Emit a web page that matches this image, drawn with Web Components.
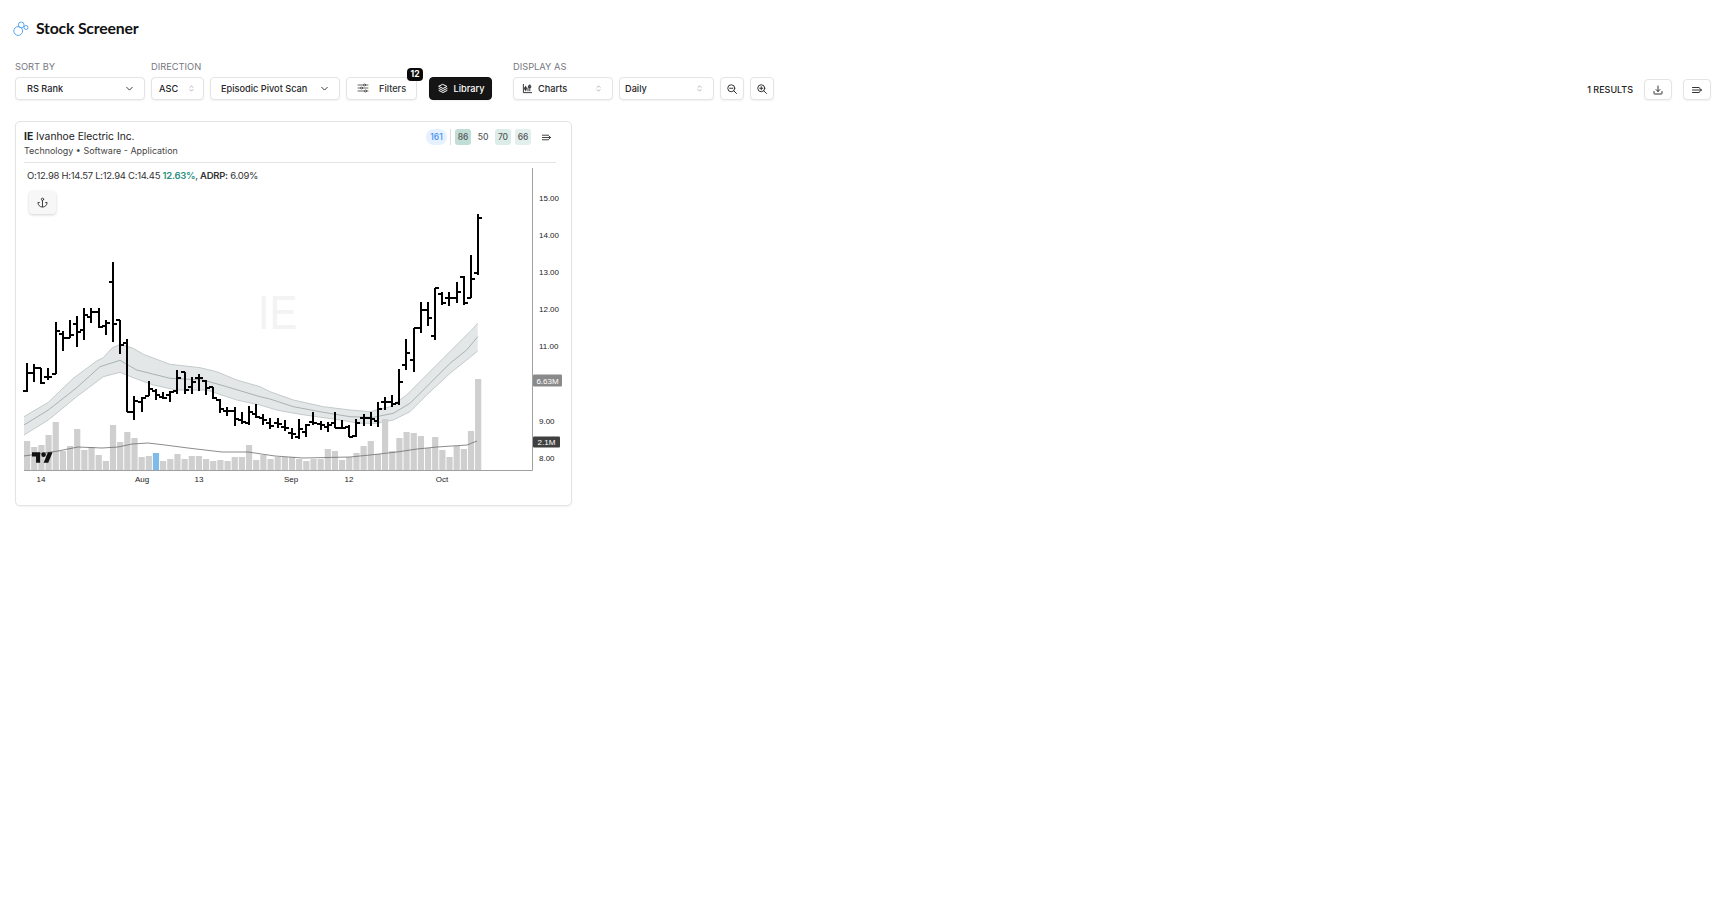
<!DOCTYPE html>
<html lang="en">
<head>
<meta charset="utf-8">
<title>Stock Screener</title>
<style>
  html, body { margin: 0; background: #fff; }
  body { font-family: "Inter", "Liberation Sans", sans-serif; color: #222; }
</style>
</head>
<body>
<screener-page></screener-page>

<script>
const ICONS = {
  chevron: `<path d="M6 9.5l6 6 6-6"/>`,
  updown: `<path d="M8 9l4-4 4 4M8 15l4 4 4-4"/>`,
  filters: `<path d="M2 6h11M17 6h5M2 12h5M11 12h11M2 18h13M19 18h3"/><circle cx="15" cy="6" r="2"/><circle cx="9" cy="12" r="2"/><circle cx="17" cy="18" r="2"/>`,
  layers: `<path d="M12 3l8 4-8 4-8-4zM4 11l8 4 8-4M4 15l8 4 8-4"/>`,
  charts: `<path d="M3 3v18h18M8 7v10M6.5 10h3v4h-3zM13 11v6M17 4v13M15 6h4v4h-4z"/>`,
  zoomout: `<circle cx="10.5" cy="10.5" r="7"/><path d="M21 21l-5.5-5.5M7.5 10.5h6"/>`,
  zoomin: `<circle cx="10.5" cy="10.5" r="7"/><path d="M21 21l-5.5-5.5M7.5 10.5h6M10.5 7.5v6"/>`,
  download: `<path d="M4 15v4a1 1 0 0 0 1 1h14a1 1 0 0 0 1-1v-4M12 4v11M8 11l4 4 4-4"/>`,
  lines: `<path d="M3 7h13M3 12h18M3 17h13M17 8.5l4 3.5-4 3.5"/>`,
  anchor: `<circle cx="12" cy="5" r="2.5"/><path d="M12 7.5V21M5 12H2a10 10 0 0 0 20 0h-3"/>`
};

function icon(name, size, width = 2) {
  return `<svg width="${size}" height="${size}" viewBox="0 0 24 24" fill="none" stroke="currentColor" stroke-width="${width}" stroke-linecap="round" stroke-linejoin="round">${ICONS[name]}</svg>`;
}

class ScreenerTitle extends HTMLElement {
  constructor() {
    super();
    this.attachShadow({ mode: "open" });
  }

  connectedCallback() {
    this.shadowRoot.innerHTML = /* html */`
    <style>
      :host { display: flex; align-items: center; gap: 7px; height: 20px; }
      svg { display: block; margin-top: 4px; }
      h1 {
        margin: 0;
        font: 700 15.8px "Lato", sans-serif;
        letter-spacing: -0.2px;
        color: #111;
      }
    </style>
    <svg width="16" height="16" viewBox="0 0 16 16" fill="none" stroke="#5aa7ee" stroke-width="1">
      <circle cx="5.2" cy="10" r="4.4"/>
      <circle cx="8.2" cy="3.9" r="2.9"/>
      <circle cx="13" cy="6.5" r="2"/>
    </svg>
    <h1><slot></slot></h1>`;
  }
}

class ToolSelect extends HTMLElement {
  constructor() {
    super();
    this.attachShadow({ mode: "open" });
  }

  connectedCallback() {
    const label = this.getAttribute("label");
    const kind = this.getAttribute("kind") || "chevron";
    const lead = this.getAttribute("lead");
    this.shadowRoot.innerHTML = /* html */`
    <style>
      :host { display: flex; flex-direction: column; gap: 4px; }
      .label {
        font-size: 9.3px;
        line-height: 12px;
        color: #77777f;
        text-transform: uppercase;
      }
      .box {
        display: flex;
        align-items: center;
        box-sizing: border-box;
        width: var(--w);
        height: 23px;
        padding: 0 var(--pr, 9px) 1px var(--pl, 11px);
        border: 1px solid #e4e4e7;
        border-radius: 4px;
        box-shadow: 0 1px 2px rgba(0, 0, 0, .06);
        font-size: 9.2px;
        font-weight: 500;
        color: #27272a;
        background: #fff;
      }
      .text { flex: 1; white-space: nowrap; }
      .lead { margin-right: 5px; display: flex; }
      .arrow { display: flex; color: ${kind === "updown" ? "#9a9aa2" : "#27272a"}; }
      svg { display: block; }
    </style>
    ${label ? `<div class="label">${label}</div>` : ""}
    <div class="box">
      ${lead ? `<span class="lead">${icon(lead, 11)}</span>` : ""}
      <span class="text"><slot></slot></span>
      <span class="arrow">${icon(kind, kind === "updown" ? 9 : 11, 2)}</span>
    </div>`;
  }
}

class ToolButton extends HTMLElement {
  constructor() {
    super();
    this.attachShadow({ mode: "open" });
  }

  connectedCallback() {
    const name = this.getAttribute("icon");
    const dark = this.hasAttribute("dark");
    const size = this.getAttribute("size") || 12;
    this.shadowRoot.innerHTML = /* html */`
    <style>
      :host { display: block; position: relative; }
      button {
        display: flex;
        align-items: center;
        justify-content: var(--justify, center);
        gap: var(--gap, 6px);
        box-sizing: border-box;
        width: var(--w, 24px);
        height: var(--h, 23px);
        padding: var(--pad, 0);
        border: 1px solid ${dark ? "#111" : "#e4e4e7"};
        border-radius: 4px;
        box-shadow: 0 1px 2px rgba(0, 0, 0, .06);
        background: ${dark ? "#151515" : "#fff"};
        color: ${dark ? "#fff" : "#333"};
        font: 500 9.2px "Inter", sans-serif;
      }
      svg { display: block; flex: none; }
      .badge {
        position: absolute;
        top: -9px;
        right: -6px;
        min-width: 16px;
        height: 13px;
        border-radius: 4px;
        background: #0a0a0a;
        color: #fff;
        font-size: 8.5px;
        font-weight: 700;
        line-height: 13px;
        text-align: center;
      }
      .badge:empty { display: none; }
    </style>
    <button>${icon(name, size, this.getAttribute("stroke") || 2)}<slot></slot></button>
    <div class="badge">${this.getAttribute("badge") || ""}</div>`;
  }
}

class RankBadges extends HTMLElement {
  constructor() {
    super();
    this.attachShadow({ mode: "open" });
  }

  connectedCallback() {
    this.shadowRoot.innerHTML = /* html */`
    <style>
      :host { display: flex; align-self: flex-start; align-items: center; gap: 4px; padding-right: 4px; font-size: 8.5px; font-weight: 500; color: #555; }
      span { width: 16px; height: 16px; border-radius: 3px; line-height: 16px; text-align: center; }
      .rank { width: 21px; border-radius: 8px; background: #e6f1ff; color: #3b8ff0; }
      i { width: 1px; height: 16px; margin: 0 0 0 -1px; background: #dcdcdc; }
      .a { background: #c0ddd6; }
      .c { background: #dcece8; }
      .d { background: #e3efec; }
      .menu { margin-left: 6px; display: flex; color: #333; }
      svg { display: block; }
    </style>
    <span class="rank">161</span><i></i>
    <span class="a">86</span><span>50</span><span class="c">70</span><span class="d">66</span>
    <div class="menu">${icon("lines", 11)}</div>`;
  }
}

// bar data is read off the chart: [high, low, open, close] in y pixels x3 from y=255
const BARS = [
  [325,410,408,355],[328,380,355,340],[338,388,338,385],[340,375,365,365],[200,358,356,228],
  [228,287,238,250],[195,250,248,240],[182,275,208,230],[158,255,225,180],[158,205,185,170],
  [158,220,170,215],[195,240,213,205],[22,262,80,207],[195,298,195,270],[253,472,265,470],
  [422,495,470,437],[425,470,440,430],[378,422,422,402],[402,436,408,420],[410,433,425,428],
  [407,442,420,410],[345,418,408,370],[352,418,352,405],[365,418,395,380],[358,408,370,368],
  [375,420,378,400],[395,432,395,430],[432,473,436,462],[455,482,467,467],[455,512,468,492],
  [470,508,495,500],[452,510,505,470],[448,490,478,485],[478,510,490,495],[490,522,505,512],
  [490,520,505,507],[495,527,515,518],[518,552,535,537],[492,552,547,522],[508,545,530,510],
  [472,510,500,505],[497,525,508,510],[500,532,515,510],[470,520,505,518],[495,522,518,518],
  [510,547,515,545],[492,545,543,503],[478,512,490,490],[472,512,490,492],[440,515,498,462],
  [427,465,440,440],[420,455,440,448],[343,450,445,380],[253,345,330,293],[220,350,315,220],
  [142,235,220,165],[142,212,165,190],[100,255,242,100],[110,150,118,145],[110,152,130,128],
  [80,145,128,112],[63,150,65,143],[0,130,130,72],[-123,60,54,-111]
];

const VOLUME = [
  29,23,25,35,48,19,24,41,20,23,15,9,45,28,38,32,13,14,17,9,11,16,11,14,14,11,9,10,9,13,13,25,10,15,11,
  13,13,13,11,9,11,11,21,19,10,13,17,24,29,16,51,19,32,38,37,34,22,33,20,13,24,21,39,91
];

const UPPER = [[12,485],[85,442],[160,370],[230,318],[250,308],[275,280],[300,268],[340,280],[370,298],[450,328],[540,338],[590,350],[650,375],[720,395],
  [750,410],[820,435],[910,455],[990,465],[1050,470],[1110,455],[1160,420],[1210,370],[1270,310],[1330,250],[1355,225],[1373,205]];
const MIDDLE = [[12,510],[85,465],[170,398],[240,335],[300,316],[350,345],[450,370],[550,375],[620,395],[720,425],
  [750,432],[820,455],[910,472],[990,485],[1060,487],[1120,475],[1170,445],[1230,385],[1290,325],[1340,285],[1373,245]];
const LOWER = [[12,540],[85,495],[170,425],[250,365],[300,352],[340,368],[400,390],[470,405],[560,405],[650,435],[720,450],
  [770,465],[840,478],[940,492],[1020,505],[1070,505],[1120,495],[1170,470],[1220,420],[1290,355],[1340,315],[1373,288]];
const VOLUME_MA = [[24,456],[58,451],[78,447],[102,448],[118,447],[132,444],[148,443],[165,445],[188,448],[222,452],[248,452],[275,456],
  [303,458],[350,457],[370,455],[397,452],[417,449],[437,447],[467,445],[477,441]];

const PRICES = ["15.00","14.00","13.00","12.00","11.00","10.00","9.00","8.00"];
const DATES = [["14",41],["Aug",142],["13",199],["Sep",291],["12",349],["Oct",442]];

class OhlcChart extends HTMLElement {
  constructor() {
    super();
    this.attachShadow({ mode: "open" });
  }

  static toPage([x, y]) {
    return [20 + x / 3, 255 + y / 3];
  }

  createBands() {
    const line = (points) => points.map(OhlcChart.toPage).map(p => p.map(n => n.toFixed(1)).join(",")).join(" ");
    const band = line(UPPER) + " " + line([...LOWER].reverse());
    return `
      <polygon points="${band}" fill="#e3e7e7"/>
      <polyline points="${line(UPPER)}" fill="none" stroke="#c3cbcb" stroke-width="1"/>
      <polyline points="${line(LOWER)}" fill="none" stroke="#c3cbcb" stroke-width="1"/>
      <polyline points="${line(MIDDLE)}" fill="none" stroke="#a9b3b3" stroke-width="1"/>`;
  }

  createVolume() {
    return VOLUME.map((h, i) => {
      const color = i === 18 ? "#7fbbe8" : "#cfcfcf";
      return `<rect x="${(24 + i * 7.16).toFixed(2)}" y="${470 - h}" width="6.2" height="${h}" fill="${color}"/>`;
    }).join("");
  }

  createBars() {
    return BARS.map(([high, low, open, close], i) => {
      const x = Math.round(27 + i * 7.16);
      const y = (v) => Math.round(255 + v / 3);
      return `<path d="M${x} ${y(high)}V${y(low)}M${x - 4} ${y(open)}H${x}M${x} ${y(close)}H${x + 4}"/>`;
    }).join("");
  }

  connectedCallback() {
    const priceLabels = PRICES.map((p, i) => `<text x="539" y="${(200.7 + i * 37.15).toFixed(1)}">${p}</text>`).join("");
    const dateLabels = DATES.map(([d, x]) => `<text x="${x}" y="482" text-anchor="middle">${d}</text>`).join("");
    const maLine = VOLUME_MA.map(p => p.join(",")).join(" ");

    this.shadowRoot.innerHTML = /* html */`
    <style>
      :host { display: block; position: relative; width: 555px; height: 335px; }
      svg.plot { display: block; font-family: "Liberation Sans", sans-serif; font-size: 8px; fill: #222; }
      .legend {
        position: absolute;
        left: 11px;
        top: 4px;
        font-size: 9.5px;
        letter-spacing: -0.28px;
        line-height: 14px;
        color: #333;
        white-space: nowrap;
      }
      .legend b { font-weight: 600; }
      .legend .up { color: #2a8f7f; font-weight: 600; }
      .anchor {
        position: absolute;
        left: 13px;
        top: 26px;
        width: 27px;
        height: 23px;
        display: flex;
        align-items: center;
        justify-content: center;
        border-radius: 4px;
        background: #f7f7f7;
        box-shadow: 0 1px 3px rgba(0, 0, 0, .18);
        color: #333;
      }
    </style>
    <svg class="plot" width="555" height="335" viewBox="16 165 555 335">
      <text transform="translate(258 328.5) scale(.85 1)" font-size="49" style="fill:#f3f3f3">IE</text>
      ${this.createBands()}
      ${this.createVolume()}
      <polyline points="${maLine}" fill="none" stroke="#6f6f6f" stroke-width=".8"/>
      <g stroke="#000" stroke-width="2" fill="none">${this.createBars()}</g>
      <g transform="translate(32 450) scale(.58)">
        <path d="M14 22H7V11H0V4h14v18zM28 22h-8l7.5-18h8L28 22z" fill="#111"/>
        <circle cx="20" cy="8" r="4" fill="#111"/>
      </g>
      <path d="M532.5 168V470.5H24" fill="none" stroke="#a0a0a0" stroke-width="1"/>
      ${priceLabels}
      ${dateLabels}
      <rect x="533" y="374.5" width="29" height="12" rx="1" fill="#8a8a8a"/>
      <text x="547.5" y="383.5" text-anchor="middle" style="fill:#fff">6.63M</text>
      <rect x="533" y="436.5" width="27" height="11" rx="1" fill="#3f3f3f"/>
      <text x="546.5" y="445" text-anchor="middle" style="fill:#fff">2.1M</text>
    </svg>
    <div class="legend">O:12.98 H:14.57 L:12.94 C:14.45 <span class="up">12.63%</span>, <b>ADRP:</b> 6.09%</div>
    <div class="anchor">${icon("anchor", 11)}</div>`;
  }
}

class StockCard extends HTMLElement {
  constructor() {
    super();
    this.attachShadow({ mode: "open" });
  }

  connectedCallback() {
    this.shadowRoot.innerHTML = /* html */`
    <style>
      :host {
        display: block;
        box-sizing: border-box;
        width: 557px;
        height: 385px;
        border: 1px solid #e4e4e7;
        border-radius: 5px;
        box-shadow: 0 1px 2px rgba(0, 0, 0, .06);
        background: #fff;
      }
      header {
        display: flex;
        justify-content: space-between;
        box-sizing: border-box;
        height: 41px;
        margin: 0 15px 2px 8px;
        padding-top: 7px;
        border-bottom: 1px solid #e4e4e7;
      }
      .name { font-size: 10.3px; line-height: 15px; color: #222; white-space: nowrap; }
      .sector { font-size: 8.95px; line-height: 13px; color: #444; white-space: nowrap; }
    </style>
    <header>
      <div>
        <div class="name"><slot name="name"></slot></div>
        <div class="sector"><slot name="sector"></slot></div>
      </div>
      <rank-badges></rank-badges>
    </header>
    <ohlc-chart></ohlc-chart>`;
  }
}

class ScreenerPage extends HTMLElement {
  constructor() {
    super();
    this.attachShadow({ mode: "open" });
  }

  connectedCallback() {
    this.shadowRoot.innerHTML = /* html */`
    <style>
      :host { display: block; box-sizing: border-box; width: 1714px; height: 908px; padding: 17px 3px 0 13px; }
      .toolbar { display: flex; align-items: flex-end; margin: 24px 0 0 2px; gap: 6px; }
      .results { font-size: 9px; font-weight: 500; color: #222; margin: 0 5px 3px auto; line-height: 14px; }
      .spacer { width: 9px; }
      stock-card { margin: 21px 0 0 2px; }
    </style>
    <screener-title>Stock Screener</screener-title>
    <div class="toolbar">
      <tool-select label="Sort by" style="--w:130px">RS Rank</tool-select>
      <tool-select label="Direction" style="--w:53px;--pl:7px;--pr:7px" kind="updown">ASC</tool-select>
      <tool-select style="--w:130px;--pl:10px">Episodic Pivot Scan</tool-select>
      <tool-button icon="filters" badge="12" stroke="1.5" style="--w:71px;--pad:0 11px 1px 10px;--gap:10px;--justify:flex-start">Filters</tool-button>
      <tool-button icon="layers" dark style="--w:63px;--gap:5px;margin-left:6px">Library</tool-button>
      <div class="spacer"></div>
      <tool-select label="Display as" lead="charts" style="--w:100px;--pl:8px;--pr:9px" kind="updown">Charts</tool-select>
      <tool-select style="--w:95px;--pl:5px;--pr:9px" kind="updown">Daily</tool-select>
      <tool-button icon="zoomout"></tool-button>
      <tool-button icon="zoomin"></tool-button>
      <div class="results">1 RESULTS</div>
      <tool-button icon="download" style="--w:28px;--h:21px"></tool-button>
      <tool-button icon="lines" style="--w:28px;--h:21px;margin-left:5px"></tool-button>
    </div>
    <stock-card>
      <span slot="name"><b>IE</b> Ivanhoe Electric Inc.</span>
      <span slot="sector">Technology • Software - Application</span>
    </stock-card>`;
  }
}

customElements.define("screener-title", ScreenerTitle);
customElements.define("tool-select", ToolSelect);
customElements.define("tool-button", ToolButton);
customElements.define("rank-badges", RankBadges);
customElements.define("ohlc-chart", OhlcChart);
customElements.define("stock-card", StockCard);
customElements.define("screener-page", ScreenerPage);
</script>
</body>
</html>
